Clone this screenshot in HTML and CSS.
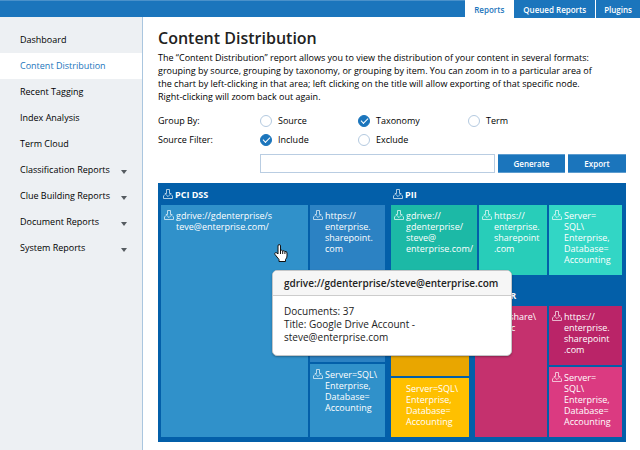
FILE: index.html
```html
<!DOCTYPE html>
<html lang="en">
<head>
<meta charset="utf-8">
<title>Content Distribution</title>
<link rel="stylesheet" href="styles.css">
</head>
<body>
<svg class="defs" width="0" height="0" aria-hidden="true">
  <symbol id="export" viewBox="0 0 10 10">
    <path d="M3.500 .5h3v4h1.600L5 7.600 1.900 4.500h1.600zM1.900 5.500L.5 7v2.500h9V7L8.100 5.500" fill="none" stroke="currentColor" stroke-width=".9"/>
  </symbol>
</svg>
<header class="topbar">
  <nav class="tabs">
    <a class="tab tab-active" href="#">Reports</a>
    <a class="tab" href="#">Queued Reports</a>
    <a class="tab" href="#">Plugins</a>
  </nav>
</header>
<div class="layout">
  <nav class="sidebar">
    <a class="item" href="#">Dashboard</a>
    <a class="item item-active" href="#">Content Distribution</a>
    <a class="item" href="#">Recent Tagging</a>
    <a class="item" href="#">Index Analysis</a>
    <a class="item" href="#">Term Cloud</a>
    <button class="item item-menu" type="button">Classification Reports</button>
    <button class="item item-menu" type="button">Clue Building Reports</button>
    <button class="item item-menu" type="button">Document Reports</button>
    <button class="item item-menu" type="button">System Reports</button>
  </nav>
  <main class="main">
    <h1>Content Distribution</h1>
    <p class="intro">The “Content Distribution” report allows you to view the distribution of your content in several formats:<br>grouping by source, grouping by taxonomy, or grouping by item. You can zoom in to a particular area of<br>the chart by left-clicking in that area; left clicking on the title will allow exporting of that specific node.<br>Right-clicking will zoom back out again.</p>
    <form class="filters">
      <div class="row" role="radiogroup" aria-labelledby="group-label">
        <span id="group-label">Group By:</span>
        <label><input type="radio" name="group">Source</label>
        <label><input type="radio" name="group" checked>Taxonomy</label>
        <label><input type="radio" name="group">Term</label>
      </div>
      <div class="row" role="radiogroup" aria-labelledby="filter-label">
        <span id="filter-label">Source Filter:</span>
        <label><input type="radio" name="filter" checked>Include</label>
        <label><input type="radio" name="filter">Exclude</label>
      </div>
      <div class="actions">
        <input class="source" type="text" aria-labelledby="filter-label">
        <button class="btn btn-wide" type="button">Generate</button>
        <button class="btn" type="button">Export</button>
      </div>
    </form>
    <section class="map">
      <div class="group">
        <h2><svg class="icon"><use href="#export"/></svg>PCI DSS</h2>
        <div class="cells cells-pci">
          <div class="cell blue tall"><svg class="icon"><use href="#export"/></svg><span>gdrive://gdenterprise/s<br>teve@enterprise.com/</span>
            <svg class="pointer" viewBox="0 0 14 18"><path d="M4 10V2q0-1.500 1.200-1.500T6.500 2v4.500q1.500-1 2.200.5 1.500-.8 2.100.5 2.200-.5 2.200 1.500v3q0 2-1.500 3.500v2H5v-2L1 10.500q-.8-1.500.5-1.800Q3 8.500 4 10z" fill="#fff" stroke="#111"/><path d="M6.500 6v4M8.700 7v3M10.900 8v2" stroke="#111" fill="none"/></svg>
            <div class="tip" role="tooltip">
              <h3>gdrive://gdenterprise/steve@enterprise.com</h3>
              <p>Documents: 37<br>Title: Google Drive Account -<br>steve@enterprise.com</p>
            </div>
          </div>
          <div class="cell navy"><svg class="icon"><use href="#export"/></svg><span>https://<br>enterprise.<br>sharepoint.<br>com</span></div>
          <div class="cell blue"><svg class="icon"><use href="#export"/></svg><span>Server=SQL\<br>Enterprise,<br>Database=<br>Accounting</span></div>
        </div>
      </div>
      <div class="side">
        <div class="group">
          <h2><svg class="icon"><use href="#export"/></svg>PII</h2>
          <div class="cells cells-pii">
            <div class="cell teal"><svg class="icon"><use href="#export"/></svg><span>gdrive://<br>gdenterprise/<br>steve@<br>enterprise.com/</span></div>
            <div class="cell mint"><svg class="icon"><use href="#export"/></svg><span>https://<br>enterprise.<br>sharepoint<br>.com</span></div>
            <div class="cell aqua"><svg class="icon"><use href="#export"/></svg><span>Server=<br>SQL\<br>Enterprise,<br>Database=<br>Accounting</span></div>
          </div>
        </div>
        <div class="pair">
          <div class="group group-low">
            <h2></h2>
            <div class="cells cells-gold">
              <div class="cell amber"></div>
              <div class="cell gold"><span class="indent">Server=SQL\<br>Enterprise,<br>Database=<br>Accounting</span></div>
            </div>
          </div>
          <div class="group group-low">
            <h2>OTHER</h2>
            <div class="cells cells-other">
              <div class="cell rose tall"><span class="indent">\\fileshare\<br>public</span></div>
              <div class="cell plum"><svg class="icon"><use href="#export"/></svg><span>https://<br>enterprise.<br>sharepoint<br>.com</span></div>
              <div class="cell pink"><svg class="icon"><use href="#export"/></svg><span>Server=<br>SQL\<br>Enterprise,<br>Database=<br>Accounting</span></div>
            </div>
          </div>
        </div>
      </div>
    </section>
  </main>
</div>
</body>
</html>
```
FILE: styles.css
```css
* { box-sizing: border-box; }
body {
  margin: 0;
  min-height: 100vh;
  display: flex;
  flex-direction: column;
  background: #fff;
  color: #000;
  font: 9px/13px "Open Sans", "Noto Sans", sans-serif;
}
h1, h2, h3, p { margin: 0; }
button, input { font: inherit; }
a { color: inherit; text-decoration: none; }
.defs { position: absolute; }

.topbar {
  height: 17px;
  background: #1b75bc;
  border-top: 1px solid #4a91ca;
}
.tabs {
  display: flex;
  justify-content: flex-end;
  gap: 1px;
  margin-top: -1px;
}
.tab {
  padding: 3px 9px 0;
  height: 18px;
  line-height: 13px;
  font-size: 8px;
  font-weight: 600;
  color: #fff;
  background: #1b75bc;
  box-shadow: 1px 0 #fff;
}
.tab-active { background: #fff; color: #1b75bc; }
.tab:last-child { padding: 3px 8px 0; }

.layout { display: flex; flex: 1; }
.sidebar {
  flex: 0 0 143px;
  padding-top: 10px;
  background: #edf0f3;
  border-right: 1px solid #aac6df;
}
.item {
  display: flex;
  align-items: center;
  justify-content: space-between;
  width: 100%;
  height: 26px;
  padding: 0 15px 1px 20px;
  border: 0;
  background: none;
  color: #000;
  text-align: left;
}
.item-active { background: #fff; color: #1b75bc; }
.item-menu::after {
  content: "";
  margin-top: 4px;
  border: 3px solid transparent;
  border-top: 4px solid #555b60;
  border-bottom: 0;
}

.main { flex: 1; min-width: 0; padding: 11px 14px 8px 15px; }
h1 { font-size: 16px; line-height: 20px; font-weight: 600; color: #222; }
.intro { margin-top: 3px; white-space: nowrap; }
.filters { margin-top: 8px; }
.row {
  display: grid;
  grid-template-columns: 102px 98px 110px 1fr;
  height: 19px;
  align-items: center;
}
.row label { display: flex; align-items: center; gap: 6px; }
.row input {
  appearance: none;
  display: grid;
  place-items: center;
  width: 12px;
  height: 12px;
  margin: 0;
  border: 1px solid #b4cae0;
  border-radius: 50%;
  background: #fff;
}
.row input:checked { background: #1b75bc; border-color: #1b75bc; }
.row input:checked::after {
  content: "";
  width: 6px;
  height: 3px;
  margin-bottom: 2px;
  border: solid #fff;
  border-width: 0 0 1px 1px;
  transform: rotate(-45deg);
}
.actions { display: flex; gap: 3px; margin: 5px 0 0 102px; }
.source {
  flex: 1;
  min-width: 0;
  height: 19px;
  border: 1px solid #b9cde2;
  background: #fff;
}
.btn {
  width: 58px;
  height: 19px;
  padding: 0 0 1px;
  border: 1px solid #5c9ccf;
  border-width: 1px 0;
  background: #1b75bc;
  color: #fff;
  font-size: 8px;
  font-weight: 600;
}
.btn-wide { width: 67px; }

.map {
  display: grid;
  grid-template-columns: 224fr 231fr;
  gap: 6px;
  margin-top: 10px;
  padding: 0 4px 5px 3px;
  min-height: 259px;
  background: #035fa9;
  color: #fff;
  line-height: 11px;
}
.group { display: flex; flex-direction: column; min-width: 0; }
.group h2 {
  display: flex;
  align-items: center;
  gap: 2px;
  height: 22px;
  padding-left: 2px;
  font-size: 9px;
  font-weight: 700;
}
.group-low h2 { height: 31px; padding: 9px 0 0 11px; }
.icon { flex: none; width: 10px; height: 10px; opacity: .75; }
.cells { display: grid; flex: 1; gap: 2px; }
.cells-pci { grid-template: 157fr 73fr / 147fr 75fr; }
.cells-pii { grid-template-columns: 86fr 68fr 73fr; }
.cells-gold { grid-template-rows: 70fr 59fr; }
.cells-other { grid-template: 59fr 70fr / 72fr 73fr; }
.side { display: grid; grid-template-rows: 92fr 162fr; min-width: 0; }
.pair { display: grid; grid-template-columns: 78fr 147fr; gap: 6px; min-width: 0; }
.cell {
  display: flex;
  gap: 2px;
  min-width: 0;
  min-height: 0;
  padding: 5px 0 0 3px;
  white-space: nowrap;
}
.tall { grid-row: span 2; position: relative; }
.indent { margin-left: 12px; }
.blue { background: #3091ca; }
.navy { background: #2c82c3; }
.teal { background: #1cb9a6; }
.mint { background: #28cdb9; }
.aqua { background: #32d6c5; }
.amber { background: #e9a600; }
.gold { background: #ffc000; }
.rose { background: #c5316e; }
.plum { background: #ba2468; }
.pink { background: #db3a81; }

.pointer {
  position: absolute;
  top: 39px;
  left: 113px;
  width: 14px;
  height: 18px;
}
.tip {
  position: absolute;
  z-index: 1;
  top: 65px;
  left: 111px;
  width: 240px;
  overflow: hidden;
  border: 1px solid #c4c6c8;
  border-radius: 5px;
  background: #fff;
  box-shadow: 0 1px 2px rgba(0, 0, 0, .3);
  color: #222;
  font-size: 10px;
  line-height: 13px;
}
.tip h3 {
  padding: 6px 11px 5px;
  border-bottom: 1px solid #ccc;
  background: #f6f6f6;
  font-size: 10px;
  font-weight: 600;
}
.tip p { padding: 9px 11px 11px; }
```
